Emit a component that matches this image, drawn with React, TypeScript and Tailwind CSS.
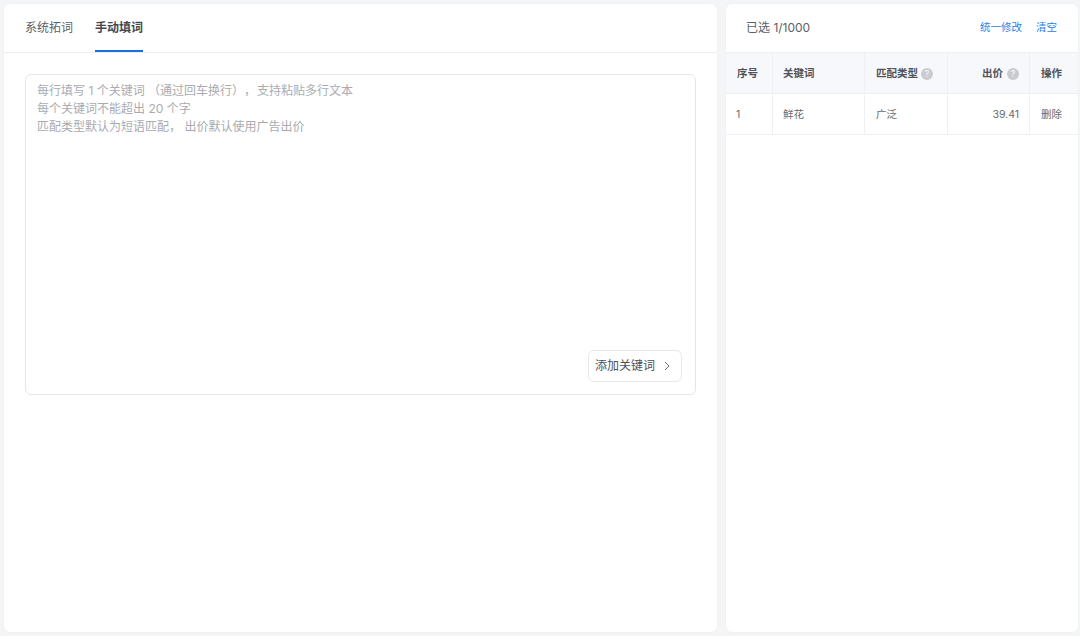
import React from "react";

const font = { fontFamily: '"Inter", "Noto Sans CJK SC", sans-serif' };

function Help({ className }: { className: string }) {
  return (
    <span className={`${className} inline-flex h-[12px] w-[12px] items-center justify-center rounded-full bg-[#c9cbce] text-[9px] font-semibold leading-none text-[#eef0f2]`}>?</span>
  );
}

export default function App() {
  return (
    <div style={font} className="flex h-[636px] w-[1080px] gap-[9px] overflow-hidden bg-[#f4f5f7] pb-[4px] pl-[4px] pr-[2px] pt-[4px] [text-spacing-trim:space-all]">
      <div className="flex w-[713px] flex-col rounded-[6px] bg-white shadow-[0_0_2px_rgba(0,0,0,0.06)]">
        <div className="flex h-[49px] gap-[22px] border-b border-[#eceef1] pl-[21px]">
          <div className="flex h-[48px] items-center pb-[1px] text-[12px] text-[#5c6066]">系统拓词</div>
          <div className="flex h-[48px] items-center border-b-[2px] border-[#1a6fe0] pt-[1px] text-[12px] font-semibold text-[#44484e]">手动填词</div>
        </div>
        <div className="px-[21px] pt-[21px]">
          <div className="flex h-[321px] flex-col justify-between rounded-[6px] border border-[#e3e5e8] pb-[12px] pl-[11px] pr-[13px] pt-[7px]">
            <div className="text-[12px] leading-[18px] text-[#a9abb0]">
              <div>每行填写 1 个关键词 （通过回车换行），<span className="ml-[1px]">支持粘贴多行文本</span></div>
              <div>每个关键词不能超出 20 个字</div>
              <div>匹配类型默认为短语匹配， 出价默认使用广告出价</div>
            </div>
            <div className="flex justify-end">
              <div className="flex h-[32px] w-[94px] items-center justify-between rounded-[6px] border border-[#e6e8eb] pl-[6px] pr-[10px] text-[12px] text-[#4c5056]">
                <span>添加关键词</span>
                <svg width="8" height="10" viewBox="0 0 8 10" fill="none" stroke="#6a6e74" strokeWidth="1"><path d="M2 1l4 4-4 4" /></svg>
              </div>
            </div>
          </div>
        </div>
      </div>
      <div className="flex w-[352px] flex-col rounded-[6px] bg-white shadow-[0_0_2px_rgba(0,0,0,0.06)]">
        <div className="flex h-[48px] items-center justify-between pl-[20px] pr-[21px]">
          <span className="text-[12px] text-[#5c6066]">已选 1/1000</span>
          <div className="flex gap-[14px] pb-[1px] text-[10.5px] text-[#2a80ea]">
            <span>统一修改</span>
            <span>清空</span>
          </div>
        </div>
        <div className="grid grid-cols-[47px_92px_83px_82px_48px] text-[10.5px]">
          <div className="flex h-[42px] items-center border-b border-r border-t border-[#eef0f3] bg-[#f7f8fb] pl-[11px] pt-[1px] font-semibold text-[#50545a]">序号</div>
          <div className="flex h-[42px] items-center border-b border-r border-t border-[#eef0f3] bg-[#f7f8fb] pl-[10px] pt-[1px] font-semibold text-[#50545a]">关键词</div>
          <div className="flex h-[42px] items-center border-b border-r border-t border-[#eef0f3] bg-[#f7f8fb] pl-[11px] pt-[1px] font-semibold text-[#50545a]">匹配类型<Help className="ml-[3px]" /></div>
          <div className="flex h-[42px] items-center justify-end border-b border-r border-t border-[#eef0f3] bg-[#f7f8fb] pr-[10px] pt-[1px] font-semibold text-[#50545a]">出价<Help className="ml-[4px]" /></div>
          <div className="flex h-[42px] items-center border-b border-t border-[#eef0f3] bg-[#f7f8fb] pl-[11px] pt-[1px] font-semibold text-[#50545a]">操作</div>
          <div className="flex h-[41px] items-center border-b border-r border-[#eef0f3] pl-[10px] pt-[1px] text-[#666a70]">1</div>
          <div className="flex h-[41px] items-center border-b border-r border-[#eef0f3] pl-[10px] pt-[1px] text-[#666a70]">鲜花</div>
          <div className="flex h-[41px] items-center border-b border-r border-[#eef0f3] pl-[11px] pt-[1px] text-[#666a70]">广泛</div>
          <div className="flex h-[41px] items-center justify-end border-b border-r border-[#eef0f3] pr-[10px] pt-[1px] text-[#666a70]">39.41</div>
          <div className="flex h-[41px] items-center border-b border-[#eef0f3] pl-[11px] pt-[1px] text-[#666a70]">删除</div>
        </div>
      </div>
    </div>
  );
}
